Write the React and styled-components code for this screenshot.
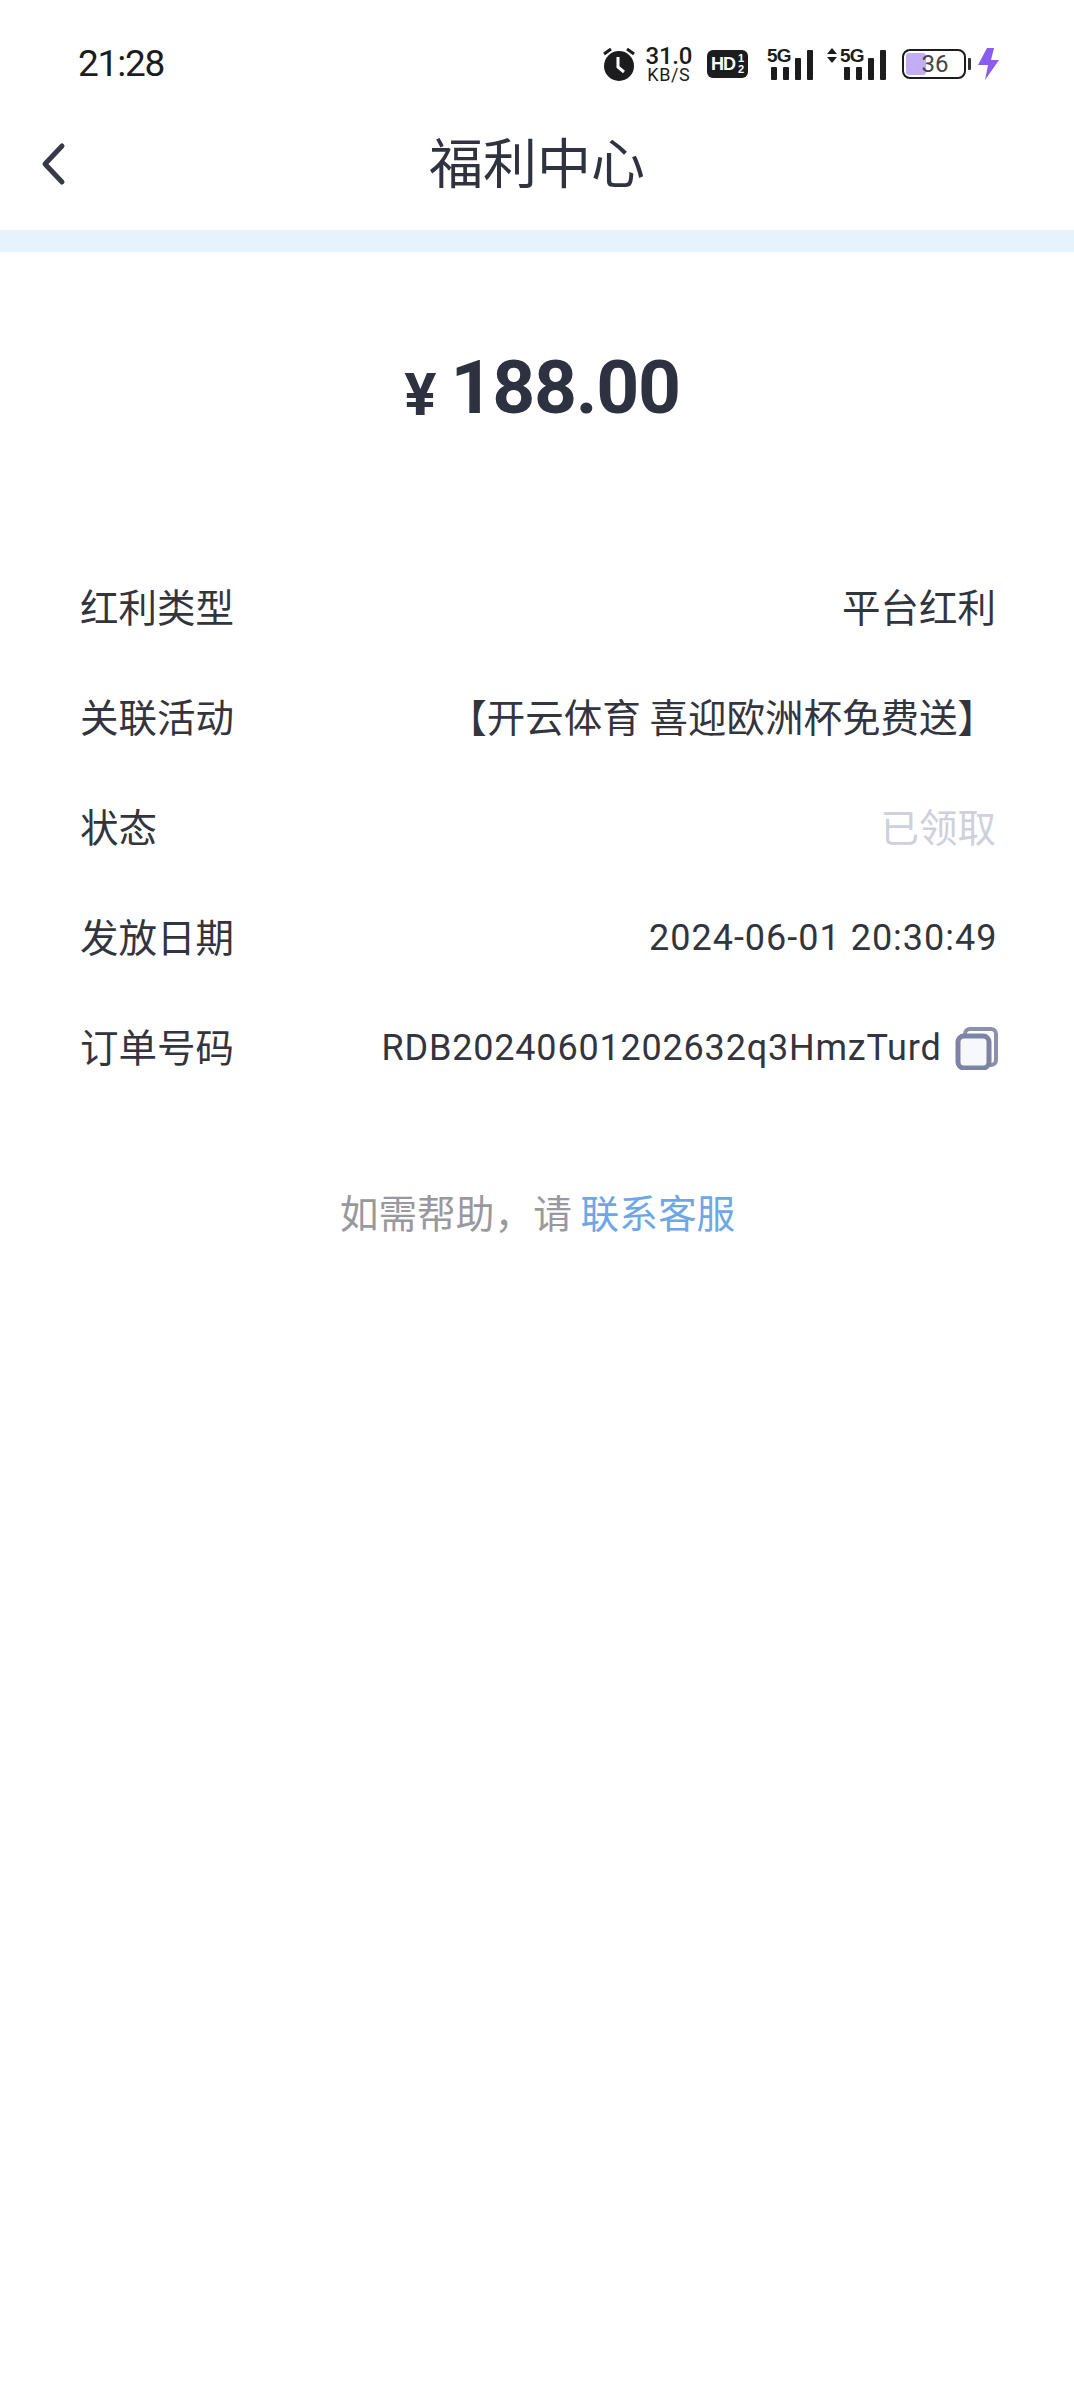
import React from "react";
import styled, { createGlobalStyle } from "styled-components";

const Global = createGlobalStyle`
  html, body { margin: 0; padding: 0; background: #fff; }
  body { font-family: "Noto Sans CJK SC", "Noto Sans", sans-serif; }
`;
const Page = styled.div`
  width: 1074px; height: 2400px; background: #fff; overflow: hidden; color: #30333f;
`;
const StatusBar = styled.div`
  height: 112px; display: flex; align-items: center; justify-content: space-between;
  padding: 14px 75px 0 78px; box-sizing: border-box;
`;
const Clock = styled.div`
  font: 400 37px/1 Roboto, sans-serif; color: #1c1c1e; letter-spacing: -1.2px;
`;
const StatusIcons = styled.div`
  display: flex; align-items: center; height: 40px; color: #1c1c1e; margin-top: 1px;
`;
const Speed = styled.div`
  display: flex; flex-direction: column; align-items: center; margin: 0 15px 0 10px;
  font-family: Roboto, sans-serif;
`;
const SpeedValue = styled.span`
  display: block; font-size: 24px; font-weight: 500; line-height: 22px; letter-spacing: -0.3px;
`;
const SpeedUnit = styled.span`
  display: block; font-size: 18px; font-weight: 400; line-height: 16px; letter-spacing: 0.6px;
`;
const HdBadge = styled.div`
  position: relative; width: 41px; height: 28px; background: #1c1c1e; border-radius: 6px;
  margin-right: 19px; color: #fff; display: flex; align-items: center; padding-left: 4px; box-sizing: border-box;
  font: 700 18px/1 "Liberation Sans", sans-serif; letter-spacing: -1px;
`;
const HdFraction = styled.span`
  display: flex; flex-direction: column; align-items: center; font-size: 11px; line-height: 11px; margin-left: 3px; letter-spacing: 0;
`;
const SignalWrap = styled.div`
  position: relative; height: 32px; display: flex; align-items: flex-end; gap: 6px;
  padding-left: ${(p) => p.$pad}px; margin-right: ${(p) => p.$mr}px;
`;
const SignalBar = styled.i`
  display: block; width: 6px; height: ${(p) => p.$h}px; background: #1c1c1e; border-radius: 1px;
`;
const SignalLabel = styled.span`
  position: absolute; left: 0; top: -2px; font: 700 19px/1 "Liberation Sans", sans-serif; letter-spacing: -0.8px;
  display: flex; align-items: center;
`;
const Battery = styled.div`
  position: relative; width: 64px; height: 30px; border: 2px solid #1c1c1e; border-radius: 8px; box-sizing: border-box; overflow: hidden;
  display: flex; align-items: center; justify-content: center; padding-left: 2px;
  font: 400 24px/1 Roboto, sans-serif; color: #444;
`;
const BatteryFill = styled.div`
  position: absolute; left: 2px; top: 2px; bottom: 2px; width: 20px; background: #c3adf7; border-radius: 3px;
`;
const BatteryNumber = styled.span`
  position: relative;
`;
const BatteryCap = styled.i`
  display: block; width: 3px; height: 12px; background: #333; margin: 0 7px 0 2px; border-radius: 1px;
`;
const NavBar = styled.div`
  position: relative; height: 118px; display: flex; align-items: center; justify-content: center; box-sizing: border-box; padding-bottom: 20px;
`;
const Back = styled.svg`
  position: absolute; left: 40px; top: 30px;
`;
const Title = styled.h1`
  margin: 0; font-size: 54px; font-weight: 400; line-height: 1; color: #30333f;
`;
const Strip = styled.div`
  height: 22px; background: #e6f3fd;
`;
const Amount = styled.div`
  height: 298px; box-sizing: border-box; padding-top: 96px; padding-left: 10px;
  display: flex; justify-content: center; align-items: flex-start; color: #2e3240; font-family: Roboto, sans-serif; font-weight: 700;
`;
const Yen = styled.span`
  font-size: 60px; line-height: 78px; margin: 8px 14px 0 0;
`;
const Value = styled.span`
  font-size: 75px; line-height: 78px; letter-spacing: -1.3px;
`;
const Rows = styled.div`
  padding: 0 78px 0 80px; display: flex; flex-direction: column;
`;
const Row = styled.div`
  height: 110px; display: flex; align-items: center; justify-content: space-between;
`;
const Label = styled.div`
  font-size: 38.5px; line-height: 1; color: #33353e;
`;
const Val = styled.div`
  font-size: 38.5px; line-height: 1; color: ${(p) => (p.$muted ? "#ced1dd" : "#33353e")};
  display: flex; align-items: center;
`;
const Mono = styled.div`
  font-family: Roboto, sans-serif; font-size: 36px; line-height: 1; color: #33353e; letter-spacing: ${(p) => p.$ls}px;
  display: flex; align-items: center; padding-top: 5px; margin-right: -1.5px;
`;
const Copy = styled.svg`
  margin: 2px 0 0 13px;
`;
const Help = styled.div`
  margin-top: 88px; padding-left: 1px; text-align: center; font-size: 38.7px; line-height: 1.2; color: #98999e;
`;
const Link = styled.span`
  color: #6ea7e6;
`;

const rows = [
  ["红利类型", <Val key="a">平台红利</Val>],
  ["关联活动", <Val key="b">【开云体育 喜迎欧洲杯免费送】</Val>],
  ["状态", <Val key="c" $muted>已领取</Val>],
  ["发放日期", <Mono key="d" $ls={1.0}>2024-06-01 20:30:49</Mono>],
  ["订单号码", (
    <Mono key="e" $ls={0.8}>
      RDB20240601202632q3HmzTurd
      <Copy width="43" height="43" viewBox="0 0 43 43" fill="none">
        <path d="M10 9V7a5 5 0 0 1 5-5h21a5 5 0 0 1 5 5v26a5 5 0 0 1-5 5h-1" stroke="#8a90ad" strokeWidth="4" />
        <rect x="3" y="9" width="31" height="32" rx="6" stroke="#7c83a3" strokeWidth="5" fill="#f7f8fc" />
      </Copy>
    </Mono>
  )],
];

export default function App() {
  return (
    <Page>
      <Global />
      <StatusBar>
        <Clock>21:28</Clock>
        <StatusIcons>
          <svg width="34" height="36" viewBox="0 0 34 36" fill="none">
            <circle cx="17" cy="20" r="15" fill="#1c1c1e" />
            <path d="M16 11v10l6 5" stroke="#fff" strokeWidth="3" />
            <path d="M2 8l7-5M32 8l-7-5" stroke="#1c1c1e" strokeWidth="3" />
          </svg>
          <Speed><SpeedValue>31.0</SpeedValue><SpeedUnit>KB/S</SpeedUnit></Speed>
          <HdBadge>HD<HdFraction><span>1</span><span>2</span></HdFraction></HdBadge>
          <SignalWrap $pad={4} $mr={14}>
            <SignalLabel>5G</SignalLabel>
            <SignalBar $h={13} /><SignalBar $h={13} /><SignalBar $h={22} /><SignalBar $h={30} />
          </SignalWrap>
          <SignalWrap $pad={17} $mr={16}>
            <SignalLabel>
              <svg width="10" height="15" viewBox="0 0 10 15" style={{ marginRight: 3 }}><path d="M5 0l5 6H0zM5 15l5-6H0z" fill="#1c1c1e" /></svg>5G
            </SignalLabel>
            <SignalBar $h={13} /><SignalBar $h={13} /><SignalBar $h={22} /><SignalBar $h={30} />
          </SignalWrap>
          <Battery><BatteryFill /><BatteryNumber>36</BatteryNumber></Battery>
          <BatteryCap />
          <svg width="21" height="32" viewBox="0 0 21 32"><path d="M9 0h7l-3 12h8L7 32l3-15H0z" fill="#8b5cf0" /></svg>
        </StatusIcons>
      </StatusBar>
      <NavBar>
        <Back width="26" height="44" viewBox="0 0 26 44" fill="none">
          <path d="M22 4L5 22l17 18" stroke="#363a48" strokeWidth="5" strokeLinecap="round" strokeLinejoin="round" />
        </Back>
        <Title>福利中心</Title>
      </NavBar>
      <Strip />
      <Amount><Yen>¥</Yen><Value>188.00</Value></Amount>
      <Rows>
        {rows.map(([l, v]) => (
          <Row key={l}><Label>{l}</Label>{v}</Row>
        ))}
      </Rows>
      <Help>如需帮助，请 <Link>联系客服</Link></Help>
    </Page>
  );
}
